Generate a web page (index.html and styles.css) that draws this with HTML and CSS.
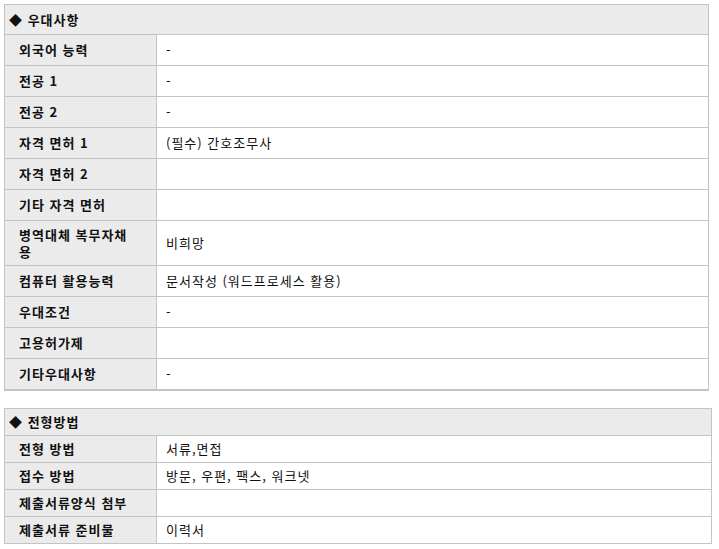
FILE: index.html
```html
<!DOCTYPE html>
<html lang="ko">
<head>
<meta charset="utf-8">
<link rel="stylesheet" href="styles.css">
</head>
<body>
<table class="info info-a">
  <colgroup><col class="c-label"><col></colgroup>
  <tr class="head"><th colspan="2">◆ 우대사항</th></tr>
  <tr><th>외국어 능력</th><td>-</td></tr>
  <tr><th>전공 1</th><td>-</td></tr>
  <tr><th>전공 2</th><td>-</td></tr>
  <tr><th>자격 면허 1</th><td>(필수) 간호조무사</td></tr>
  <tr><th>자격 면허 2</th><td></td></tr>
  <tr><th>기타 자격 면허</th><td></td></tr>
  <tr class="tall"><th>병역대체 복무자채용</th><td>비희망</td></tr>
  <tr><th>컴퓨터 활용능력</th><td>문서작성 (워드프로세스 활용)</td></tr>
  <tr><th>우대조건</th><td>-</td></tr>
  <tr><th>고용허가제</th><td></td></tr>
  <tr><th>기타우대사항</th><td>-</td></tr>
</table>

<table class="info info-b">
  <colgroup><col class="c-label"><col></colgroup>
  <tr class="head"><th colspan="2">◆ 전형방법</th></tr>
  <tr><th>전형 방법</th><td>서류,면접</td></tr>
  <tr><th>접수 방법</th><td>방문, 우편, 팩스, 워크넷</td></tr>
  <tr><th>제출서류양식 첨부</th><td></td></tr>
  <tr><th>제출서류 준비물</th><td>이력서</td></tr>
</table>
</body>
</html>
```

FILE: styles.css
```css
html, body {
  margin: 0;
  background: #ffffff;
}
body {
  padding: 4px 0 0 4px;
  font-family: "Noto Sans CJK KR", "Noto Sans", sans-serif;
  font-size: 13px;
  letter-spacing: 1px;
  color: #111;
}
.info {
  border-collapse: collapse;
  table-layout: fixed;
}
.info-a {
  width: 705px;
  border-bottom: 2px solid #c4c4c4;
}
.info-b {
  width: 708px;
  margin-top: 17px;
}
.c-label {
  width: 152px;
}
.info th,
.info td {
  border: 1px solid #c4c4c4;
  padding: 0;
  text-align: left;
  vertical-align: middle;
  line-height: 16px;
}
.info th {
  background: #ebebeb;
  font-weight: bold;
  padding-left: 14px;
}
.info td {
  background: #fff;
  padding-left: 9px;
  font-weight: normal;
}
.info-a tr { height: 31px; }
.info-a tr.head { height: 30px; }
.info-a tr.tall { height: 45px; }
.info-a tr.tall th {
  padding-right: 26px;
  line-height: 17px;
}
.info-b tr { height: 27px; }
.info-b tr.head { height: 27px; }
.info tr.head th {
  padding-left: 4px;
  background: #ebebeb;
}
```
